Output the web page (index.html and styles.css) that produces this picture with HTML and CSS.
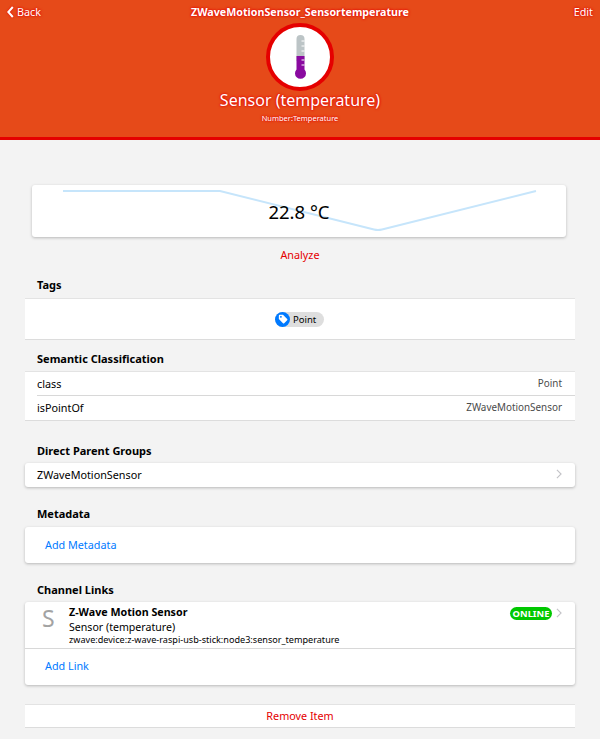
FILE: index.html
```html
<!DOCTYPE html>
<html lang="en">
<head>
<meta charset="utf-8">
<title>ZWaveMotionSensor_Sensortemperature</title>
<link rel="stylesheet" href="styles.css">
</head>
<body>
<header class="hero">
  <nav class="nav">
    <a class="nav-back"><svg class="back-icon" viewBox="0 0 7 12" width="7" height="12"><path d="M5.800 1 1.300 6l4.500 5" fill="none" stroke="#fff" stroke-width="2"/></svg>Back</a>
    <span class="nav-title">ZWaveMotionSensor_Sensortemperature</span>
    <a class="nav-edit">Edit</a>
  </nav>
  <div class="avatar">
    <svg viewBox="0 0 11 45" width="11" height="45">
      <path d="M1.500 4a4 4 0 0 1 8 0v22h-8z" fill="#bcc4c6"/>
      <path d="M1.500 21h8v13.500a5.500 5.500 0 1 1-8 0z" fill="#8a0aa0"/>
      <path d="M6.500 6h3M6.500 11h3M6.500 16h3M6.500 25h3M6.500 30h3" stroke="#fff" stroke-width="1"/>
    </svg>
  </div>
  <h1 class="hero-name">Sensor (temperature)</h1>
  <p class="hero-type">Number:Temperature</p>
</header>

<main class="content">
  <section class="state-card">
    <svg class="spark" viewBox="0 0 534 52" width="534" height="52"><path d="M31 6H188L342 44.500q4 1 8 0L504 6" fill="none" stroke="#c6e5fb" stroke-width="2"/></svg>
    <span class="state-value">22.8 °C</span>
  </section>
  <a class="analyze">Analyze</a>

  <h2 class="title title-tags">Tags</h2>
  <div class="list list-tags">
    <span class="chip">
      <span class="chip-icon"><svg viewBox="0 0 12 12" width="10" height="10"><path fill-rule="evenodd" d="M1 2a1 1 0 0 1 1-1h4l5 5a1 1 0 0 1 0 1.400L7.400 11a1 1 0 0 1-1.400 0L1 6zM3.500 2.500a1 1 0 1 0 .01 0z" fill="#fff"/></svg></span>
      <span class="chip-label">Point</span>
    </span>
  </div>

  <h2 class="title title-semantic">Semantic Classification</h2>
  <div class="list list-plain">
    <div class="row row-first"><span>class</span><span class="row-after">Point</span></div>
    <div class="row"><span>isPointOf</span><span class="row-after">ZWaveMotionSensor</span></div>
  </div>

  <h2 class="title title-groups">Direct Parent Groups</h2>
  <div class="card">
    <div class="row row-link"><span>ZWaveMotionSensor</span><svg class="chevron" viewBox="0 0 7 12" width="6" height="10"><path d="M1 1l5 5-5 5" fill="none" stroke="#c2c2c6" stroke-width="1.300"/></svg></div>
  </div>

  <h2 class="title title-meta">Metadata</h2>
  <div class="card">
    <a class="add-link add-meta">Add Metadata</a>
  </div>

  <h2 class="title title-channel">Channel Links</h2>
  <div class="card">
    <div class="channel">
      <span class="channel-letter">S</span>
      <div class="channel-text">
        <strong class="channel-name">Z-Wave Motion Sensor</strong>
        <span class="channel-label">Sensor (temperature)</span>
        <span class="channel-uid">zwave:device:z-wave-raspi-usb-stick:node3:sensor_temperature</span>
      </div>
      <span class="badge">ONLINE</span>
      <svg class="chevron channel-chevron" viewBox="0 0 7 12" width="6" height="10"><path d="M1 1l5 5-5 5" fill="none" stroke="#c2c2c6" stroke-width="1.300"/></svg>
    </div>
    <a class="add-link add-channel">Add Link</a>
  </div>

  <div class="list remove"><a class="remove-link">Remove Item</a></div>
</main>
</body>
</html>
```

FILE: styles.css
```css
* { box-sizing: border-box; }
html, body { margin: 0; padding: 0; }
body {
  width: 600px;
  height: 739px;
  overflow: hidden;
  background: #f3f3f3;
  color: #000;
  font-family: "Noto Sans", sans-serif;
  font-size: 10.800px;
}
.hero {
  height: 140px;
  background: #e64a19;
  border-bottom: 3px solid #e50000;
  color: #fff;
  text-shadow: 0 0 3px #e50000, 0 0 2px #e50000;
  display: flex;
  flex-direction: column;
  align-items: center;
}
.nav {
  width: 100%;
  height: 23px;
  padding: 0 7px;
  display: flex;
  align-items: center;
  justify-content: space-between;
  font-size: 10.800px;
}
.nav-back { display: flex; align-items: center; gap: 3px; width: 60px; }
.back-icon { filter: drop-shadow(0 0 1px #e50000); }
.nav-title { font-weight: 700; font-size: 10.700px; }
.nav-edit { width: 60px; text-align: right; }
.avatar {
  width: 68px;
  height: 68px;
  flex: none;
  border-radius: 50%;
  background: #fff;
  border: 4px solid #e50000;
  display: flex;
  align-items: center;
  justify-content: center;
}
.hero-name {
  margin: 0;
  font-size: 16px;
  line-height: 19px;
  font-weight: 400;
}
.hero-type {
  margin: 3px 0 0;
  font-size: 7.500px;
  line-height: 10px;
}
.content {
  padding: 45px 25px 0;
  display: flex;
  flex-direction: column;
}
.state-card {
  position: relative;
  height: 52px;
  margin: 0 7px;
  width: 534px;
  background: #fff;
  border-radius: 3px;
  box-shadow: 0 1px 3px rgba(0,0,0,.25);
  display: flex;
  align-items: center;
  justify-content: center;
}
.spark { position: absolute; left: 0; top: 0; }
.state-value { position: relative; font-size: 18.500px; }
.analyze {
  margin-top: 10px;
  text-align: center;
  color: #e50000;
  line-height: 15px;
}
.title {
  margin: 0 0 5px 12px;
  font-size: 11px;
  line-height: 16px;
  font-weight: 700;
}
.title-tags { margin-top: 15px; margin-bottom: 5px; }
.title-semantic { margin-top: 11px; margin-bottom: 4px; }
.title-groups { margin-top: 22px; margin-bottom: 4px; }
.title-meta { margin-top: 19px; margin-bottom: 5px; }
.title-channel { margin-top: 19px; margin-bottom: 4px; }
.list {
  background: #fff;
  border-top: 1px solid #e3e3e3;
  border-bottom: 1px solid #dcdcdc;
}
.list-tags {
  height: 42px;
  display: flex;
  align-items: center;
  justify-content: center;
}
.chip {
  display: flex;
  align-items: center;
  height: 15px;
  width: 49px;
  margin-right: 1px;
  border-radius: 8px;
  background: #dedede;
  font-size: 9.500px;
}
.chip-icon {
  width: 15px;
  height: 15px;
  border-radius: 50%;
  background: #007aff;
  display: flex;
  align-items: center;
  justify-content: center;
}
.chip-label { margin-left: 3px; }
.row {
  height: 24px;
  padding: 0 13px 2px 12px;
  display: flex;
  align-items: center;
  justify-content: space-between;
}
.list-plain .row-first { position: relative; }
.list-plain .row-first::after {
  content: "";
  position: absolute;
  left: 12px;
  right: 0;
  bottom: 0;
  height: 1px;
  background: #d8d8d8;
}
.row-after { color: #4a4a4a; font-size: 9.900px; }
.card {
  background: #fff;
  border-radius: 3px;
  box-shadow: 0 1px 3px rgba(0,0,0,.25);
}
.row-link { height: 24px; }
.add-link { display: block; color: #007aff; padding-left: 20px; line-height: 36px; height: 36px; }
.channel {
  position: relative;
  height: 47px;
  padding: 3px 13px 0 44px;
  display: flex;
  align-items: flex-start;
  border-bottom: 1px solid #d8d8d8;
}
.channel-letter {
  position: absolute;
  left: 17px;
  top: 1px;
  font-size: 23px;
  line-height: 30px;
  color: #a3a3a3;
}
.channel-text { flex: 1; display: flex; flex-direction: column; }
.channel-name { font-size: 10.700px; line-height: 15px; font-weight: 700; }
.channel-label { font-size: 10.600px; line-height: 14px; }
.channel-uid { font-size: 9.100px; line-height: 11px; }
.badge {
  margin-top: 2px;
  margin-right: 1px;
  height: 13px;
  width: 42px;
  border-radius: 7px;
  background: #00c800;
  color: #fff;
  text-align: center;
  font-size: 9.400px;
  line-height: 13px;
  font-weight: 700;
}
.channel-chevron { margin: 3px 0 0 3px; }
.add-channel { height: 36px; line-height: 34px; }
.remove {
  margin-top: 19px;
  height: 24px;
  text-align: center;
  line-height: 22px;
  color: #e50000;
}
```
